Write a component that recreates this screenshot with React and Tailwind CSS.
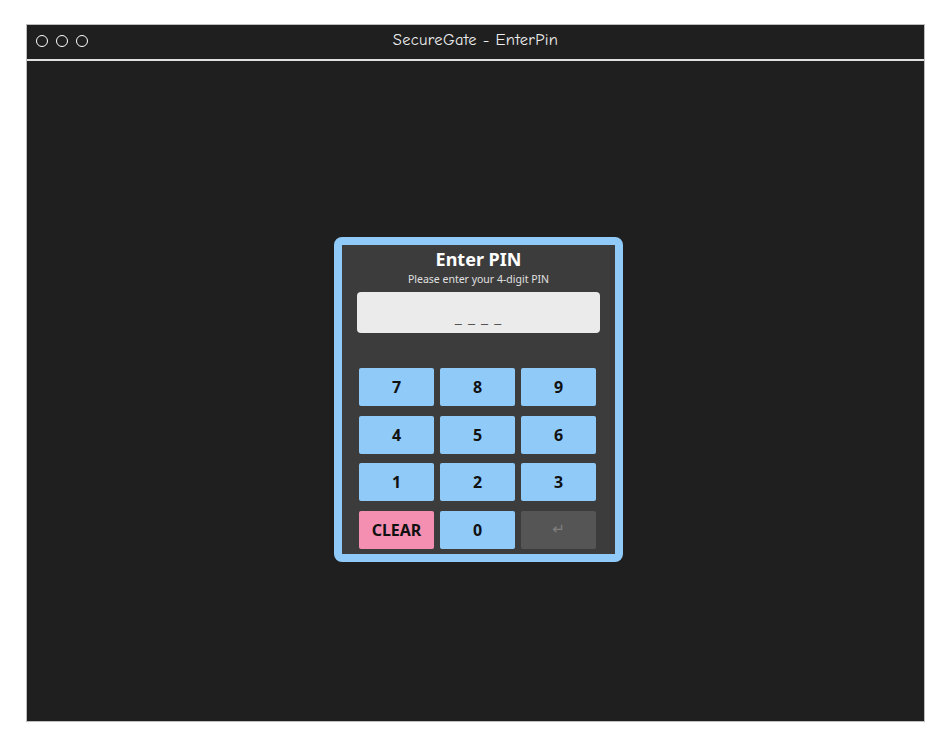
import React from "react";

const keys = ["7", "8", "9", "4", "5", "6", "1", "2", "3"];

export default function App() {
  return (
    <div className="w-[952px] h-[744px] bg-white pt-[24px] pl-[26px]" style={{ fontFamily: '"Open Sans", "Noto Sans", sans-serif' }}>
      <div className="w-[899px] h-[698px] bg-[#1f1f1f] border border-[#bdbdbd] flex flex-col">
        <div className="h-[36px] shrink-0 flex items-center relative border-b-2 border-[#e0e0e0]">
          <div className="flex items-center gap-[8px] pl-[9px] pb-[3px]">
            <div className="w-[12px] h-[12px] rounded-full border-[1.5px] border-white" />
            <div className="w-[12px] h-[12px] rounded-full border-[1.5px] border-white" />
            <div className="w-[12px] h-[12px] rounded-full border-[1.5px] border-white" />
          </div>
          <div className="absolute inset-0 flex items-center justify-center pb-[3px] text-[16.5px] text-[#eeeeee] tracking-[0.3px]" style={{ fontFamily: '"Comic Neue", "Liberation Sans", sans-serif' }}>
            SecureGate - EnterPin
          </div>
        </div>
        <div className="flex-1 flex justify-center pt-[176px] pl-[6px]">
          <div className="w-[289px] h-[325px] border-[8px] border-[#90caf9] rounded-[8px] bg-[#3c3c3c] flex flex-col items-center pt-[3px]">
            <div className="text-[18px] leading-[22px] font-bold text-white" style={{ fontFamily: '"Noto Sans", sans-serif' }}>Enter PIN</div>
            <div className="mt-[2px] text-[10.5px] leading-[14px] text-[#e0e0e0]" style={{ fontFamily: '"Noto Sans", sans-serif' }}>Please enter your 4-digit PIN</div>
            <div className="mt-[6px] w-[243px] h-[41px] shrink-0 bg-[#ebebeb] rounded-[4px] flex items-end justify-center pb-[6px] text-[16px] leading-[20px] text-[#555] tracking-[1px]">
              _ _ _ _
            </div>
            <div className="mt-[35px] mr-[2px] grid grid-cols-[75px_75px_75px] gap-x-[6px] gap-y-[9.5px]">
              {keys.map((k) => (
                <div key={k} className="h-[38px] rounded-[2px] bg-[#90caf9] flex items-center justify-center text-[16px] font-bold text-[#111]" style={{ fontFamily: '"Noto Sans", sans-serif' }}>
                  {k}
                </div>
              ))}
              <div className="h-[38px] rounded-[2px] bg-[#f48fb1] flex items-center justify-center text-[16px] font-bold text-[#111]" style={{ fontFamily: '"Noto Sans", sans-serif' }}>
                CLEAR
              </div>
              <div className="h-[38px] rounded-[2px] bg-[#90caf9] flex items-center justify-center text-[16px] font-bold text-[#111]" style={{ fontFamily: '"Noto Sans", sans-serif' }}>
                0
              </div>
              <div className="h-[38px] rounded-[2px] bg-[#555555] flex items-center justify-center text-[15px] text-[#808080]" style={{ fontFamily: '"DejaVu Sans", sans-serif' }}>
                ↵
              </div>
            </div>
          </div>
        </div>
      </div>
    </div>
  );
}
